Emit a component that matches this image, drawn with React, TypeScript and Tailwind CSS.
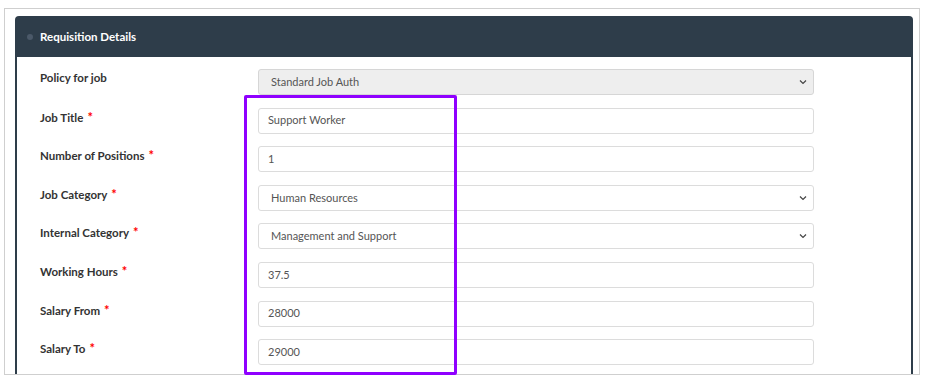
import React from "react";

type Field = {
    label: string;
    value: string;
    required: boolean;
    kind: "input" | "select" | "locked";
};

const fields: Field[] = [
    { label: "Policy for job", value: "Standard Job Auth", required: false, kind: "locked" },
    { label: "Job Title", value: "Support Worker", required: true, kind: "input" },
    { label: "Number of Positions", value: "1", required: true, kind: "input" },
    { label: "Job Category", value: "Human Resources", required: true, kind: "select" },
    { label: "Internal Category", value: "Management and Support", required: true, kind: "select" },
    { label: "Working Hours", value: "37.5", required: true, kind: "input" },
    { label: "Salary From", value: "28000", required: true, kind: "input" },
    { label: "Salary To", value: "29000", required: true, kind: "input" },
];

const Chevron: React.FC = () => (
    <svg width="8" height="5" viewBox="0 0 8 5" className="absolute right-[6px] top-1/2 -translate-y-1/2">
        <path d="M1 1 L4 4 L7 1" fill="none" stroke="#444" strokeWidth="1.2" />
    </svg>
);

const FieldBox: React.FC<{ field: Field }> = ({ field }) => {
    if (field.kind === "input") {
        return (
            <div className="w-[556px] h-[26px] border border-[#dcdcdc] rounded-[3px] bg-white flex items-center pl-[9px] text-[11px] text-[#555]">
                {field.value}
            </div>
        );
    }
    const locked = field.kind === "locked";
    return (
        <div
            className={
                locked
                    ? "relative w-[556px] h-[26px] border border-[#d6d6d6] rounded-[3px] bg-[#eeeeee] flex items-center pl-[12px] text-[11px] text-[#555]"
                    : "relative w-[556px] h-[26px] border border-[#dcdcdc] rounded-[3px] bg-white flex items-center pl-[12px] text-[11px] text-[#555]"
            }
        >
            {field.value}
            <Chevron />
        </div>
    );
};

export default function App() {
    return (
        <div className="relative w-[925px] h-[382px] bg-white overflow-hidden pl-[4px] pt-[8px] font-['Lato',sans-serif]">
            <div className="w-[916px] h-[367px] border border-[#cfcfcf] overflow-hidden pl-[10px] pt-[7px]">
                <div className="w-[898px]">
                    {/* Header */}
                    <div className="h-[41px] bg-[#2e3d4a] rounded-t-[4px] flex items-center pl-[12px] gap-[7px]">
                        <span className="w-[6px] h-[6px] rounded-full bg-[#4b5969]" />
                        <span className="text-white text-[11.5px] font-bold">Requisition Details</span>
                    </div>

                    {/* Body */}
                    <div className="border-l-2 border-r-2 border-[#2e3d4a] bg-white pt-[12px] pl-[23px] pb-[20px] flex flex-col gap-[12.6px]">
                        {fields.map((f) => (
                            <div key={f.label} className="flex items-start">
                                <div className="w-[218px] pt-[1px] text-[11.5px] font-bold text-[#333] leading-[16px]">
                                    {f.label}
                                    {f.required && <span className="text-[#ff0000] text-[13px] ml-[4px]">*</span>}
                                </div>
                                <FieldBox field={f} />
                            </div>
                        ))}
                    </div>
                </div>
            </div>

            {/* Highlight annotation */}
            <div className="absolute left-[244px] top-[95px] w-[213px] h-[280px] border-[3px] border-[#8f00ff] rounded-[2px]" />
        </div>
    );
}
